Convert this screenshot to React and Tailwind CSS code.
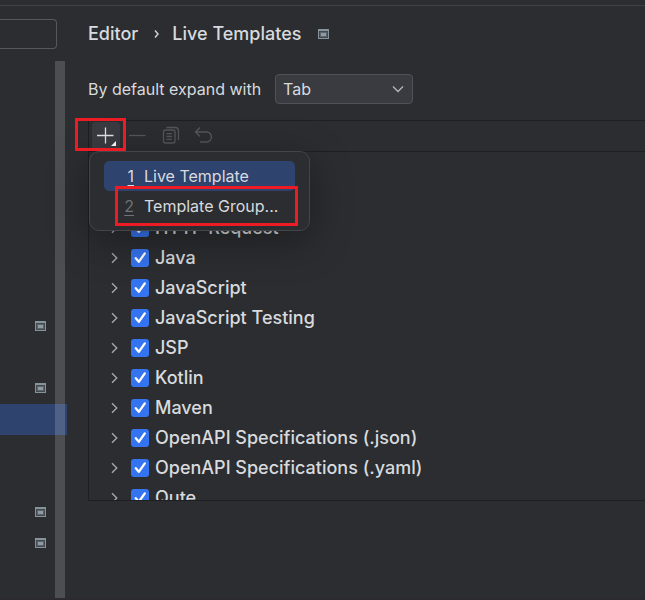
const groups = [
  "HTTP Request",
  "Java",
  "JavaScript",
  "JavaScript Testing",
  "JSP",
  "Kotlin",
  "Maven",
  "OpenAPI Specifications (.json)",
  "OpenAPI Specifications (.yaml)",
  "Qute",
];

const sidebarRows = Array.from({ length: 17 }, (_, i) => ({
  id: i,
  projectLevel: [8, 10, 14, 15].includes(i),
  selected: i === 11,
}));

function ProjectIcon() {
  return (
    <svg width="11" height="10" viewBox="0 0 11 10" shapeRendering="crispEdges" aria-hidden="true">
      <rect width="11" height="10" fill="#87939a" />
      <rect x="1" y="2" width="9" height="7" fill="#43494e" />
      <rect x="2" y="3" width="7" height="5" fill="#5b646a" />
      <rect x="3" y="4" width="5" height="3" fill="#8f9ba2" />
    </svg>
  );
}

function Sidebar() {
  return (
    <aside className="relative w-[67px] shrink-0 pt-[13px]">
      <input
        type="search"
        aria-label="Search settings"
        className="block h-[30px] w-[57px] rounded-r-[4px] border border-l-0 border-[#56585d] bg-transparent px-2 outline-none"
      />
      <ul className="mt-[14px]">
        {sidebarRows.map((row) => (
          <li
            key={row.id}
            className={
              row.selected
                ? "flex h-[31px] items-center bg-[#2e436e] pl-[35px]"
                : "flex h-[31px] items-center pb-px pl-[35px]"
            }
          >
            {row.projectLevel && <ProjectIcon />}
          </li>
        ))}
      </ul>
      <div className="absolute top-[55px] right-[2px] bottom-0 w-[10px] bg-white/16" />
    </aside>
  );
}

function TemplateRow({ name }) {
  return (
    <li className="flex h-[30px] items-center pl-[20px]">
      <button type="button" aria-label={`Expand ${name}`} className="flex w-[22px] justify-start">
        <svg width="12" height="12" viewBox="0 0 12 12" fill="none" stroke="#a9acb2" strokeWidth="1.3" aria-hidden="true">
          <path d="M3 1.2 L7.8 6 L3 10.8" />
        </svg>
      </button>
      <label className="flex items-center gap-[6px]">
        <span className="grid">
          <input
            type="checkbox"
            defaultChecked
            className="col-start-1 row-start-1 size-[18px] appearance-none rounded-[3px] bg-[#3574f0]"
          />
          <svg
            width="18"
            height="18"
            viewBox="0 0 18 18"
            fill="none"
            stroke="#fff"
            strokeWidth="2.3"
            strokeLinecap="round"
            strokeLinejoin="round"
            className="pointer-events-none col-start-1 row-start-1"
            aria-hidden="true"
          >
            <path d="M4.8 9.2 L7.8 12.8 L13.8 4.4" />
          </svg>
        </span>
        <span className="text-[18px] font-medium whitespace-nowrap">{name}</span>
      </label>
    </li>
  );
}

function Toolbar() {
  return (
    <div className="flex h-[31px] items-center border-b border-[#1e1f22] pl-[3px]">
      <button type="button" aria-label="Add" className="size-[28px] rounded-[4px] bg-[#393b40]">
        <svg width="28" height="28" viewBox="0 0 28 28" fill="none" stroke="#dfe1e5" strokeWidth="1.3" aria-hidden="true">
          <path d="M5 13.5 H21.5 M13.5 5.5 V21.5" />
          <path d="M24 19 V24 H19 Z" fill="#fff" stroke="none" />
        </svg>
      </button>
      <button type="button" aria-label="Remove" disabled className="ml-[6px] size-[24px]">
        <svg width="24" height="24" viewBox="0 0 24 24" stroke="#54565a" strokeWidth="1.3" aria-hidden="true">
          <path d="M3 11.5 H19.5" />
        </svg>
      </button>
      <button type="button" aria-label="Duplicate" disabled className="ml-[9px] size-[24px]">
        <svg width="24" height="24" viewBox="0 0 24 24" fill="none" stroke="#54565a" strokeWidth="1.3" aria-hidden="true">
          <path d="M7.5 3.5 H16 Q19.5 3.5 19.5 7 V16" />
          <rect x="4.5" y="6" width="11.5" height="13" rx="2" />
          <path d="M7.5 9.7 H13 M7.5 12.5 H13 M7.5 15.3 H13" />
        </svg>
      </button>
      <button type="button" aria-label="Revert" disabled className="ml-[9px] size-[24px]">
        <svg width="24" height="24" viewBox="0 0 24 24" fill="none" stroke="#54565a" strokeWidth="1.4" aria-hidden="true">
          <path d="M8 3.5 L3.5 8 L8 12.5 M3.5 8 H14.5 A5 5 0 0 1 14.5 18 H8" />
        </svg>
      </button>
    </div>
  );
}

function AddMenu() {
  return (
    <div
      role="menu"
      className="absolute top-[30px] left-0 flex w-[221px] flex-col rounded-[10px] border border-[#43454a] bg-[#2b2d30] px-[14px] py-[9px] shadow-[0_10px_40px_rgba(0,0,0,0.35)]"
    >
      <button type="button" role="menuitem" className="flex h-[30px] items-center rounded-[5px] bg-[#2e436e] text-left">
        <span className="w-[30px] text-right underline underline-offset-3">1</span>
        <span className="pl-[10px]">Live Template</span>
      </button>
      <button type="button" role="menuitem" className="flex h-[30px] items-center text-left">
        <span className="w-[30px] text-right text-[#6f737a] underline underline-offset-3">2</span>
        <span className="pl-[10px]">Template Group...</span>
      </button>
      <div className="pointer-events-none absolute top-[34px] left-[25px] h-[40px] w-[183px] border-3 border-[#ed1c24]" />
    </div>
  );
}

export default function App() {
  return (
    <div className="flex min-h-screen flex-col border-b-2 border-[#2d2a2e] bg-[#2b2d30] font-['Inter','Liberation_Sans',sans-serif] text-[16px] leading-[20px] text-[#d8dade]">
      <div className="h-[6px] border-b border-[#3f4145]" />
      <div className="flex flex-1">
        <Sidebar />
        <main className="min-w-0 flex-1 pl-[21px]">
          <nav aria-label="Breadcrumb" className="flex h-[56px] items-center text-[18px] font-medium">
            <a href="#editor">Editor</a>
            <svg width="6" height="10" viewBox="0 0 6 10" fill="none" stroke="#ced0d6" strokeWidth="1.5" className="mr-[12px] ml-[16px]" aria-hidden="true">
              <path d="M1 1.5 L4 5 L1 8.5" />
            </svg>
            <h1>Live Templates</h1>
            <span className="ml-[17px]">
              <ProjectIcon />
            </span>
          </nav>
          <div className="flex h-[54px] items-center gap-[14px]">
            <label htmlFor="expand-key">By default expand with</label>
            <div className="grid w-[138px] items-center">
              <select
                id="expand-key"
                defaultValue="Tab"
                className="col-start-1 row-start-1 h-[30px] appearance-none rounded-[4px] border border-[#4e5157] bg-[#393b40] pl-[7px] outline-none"
              >
                <option>Tab</option>
              </select>
              <svg
                width="12"
                height="8"
                viewBox="0 0 12 8"
                fill="none"
                stroke="#b4b8bf"
                strokeWidth="1.3"
                className="pointer-events-none col-start-1 row-start-1 mr-[9px] justify-self-end"
                aria-hidden="true"
              >
                <path d="M1 1.5 L6 6.5 L11 1.5" />
              </svg>
            </div>
          </div>
          <section className="relative mt-[4px] border-y border-l border-[#1e1f22]">
            <Toolbar />
            <ul className="h-[348px] overflow-hidden pt-[61px]">
              {groups.map((name) => (
                <TemplateRow key={name} name={name} />
              ))}
            </ul>
            <AddMenu />
            <div className="pointer-events-none absolute top-[-3px] left-[-14px] h-[33px] w-[51px] border-3 border-[#ed1c24]" />
          </section>
        </main>
      </div>
    </div>
  );
}
